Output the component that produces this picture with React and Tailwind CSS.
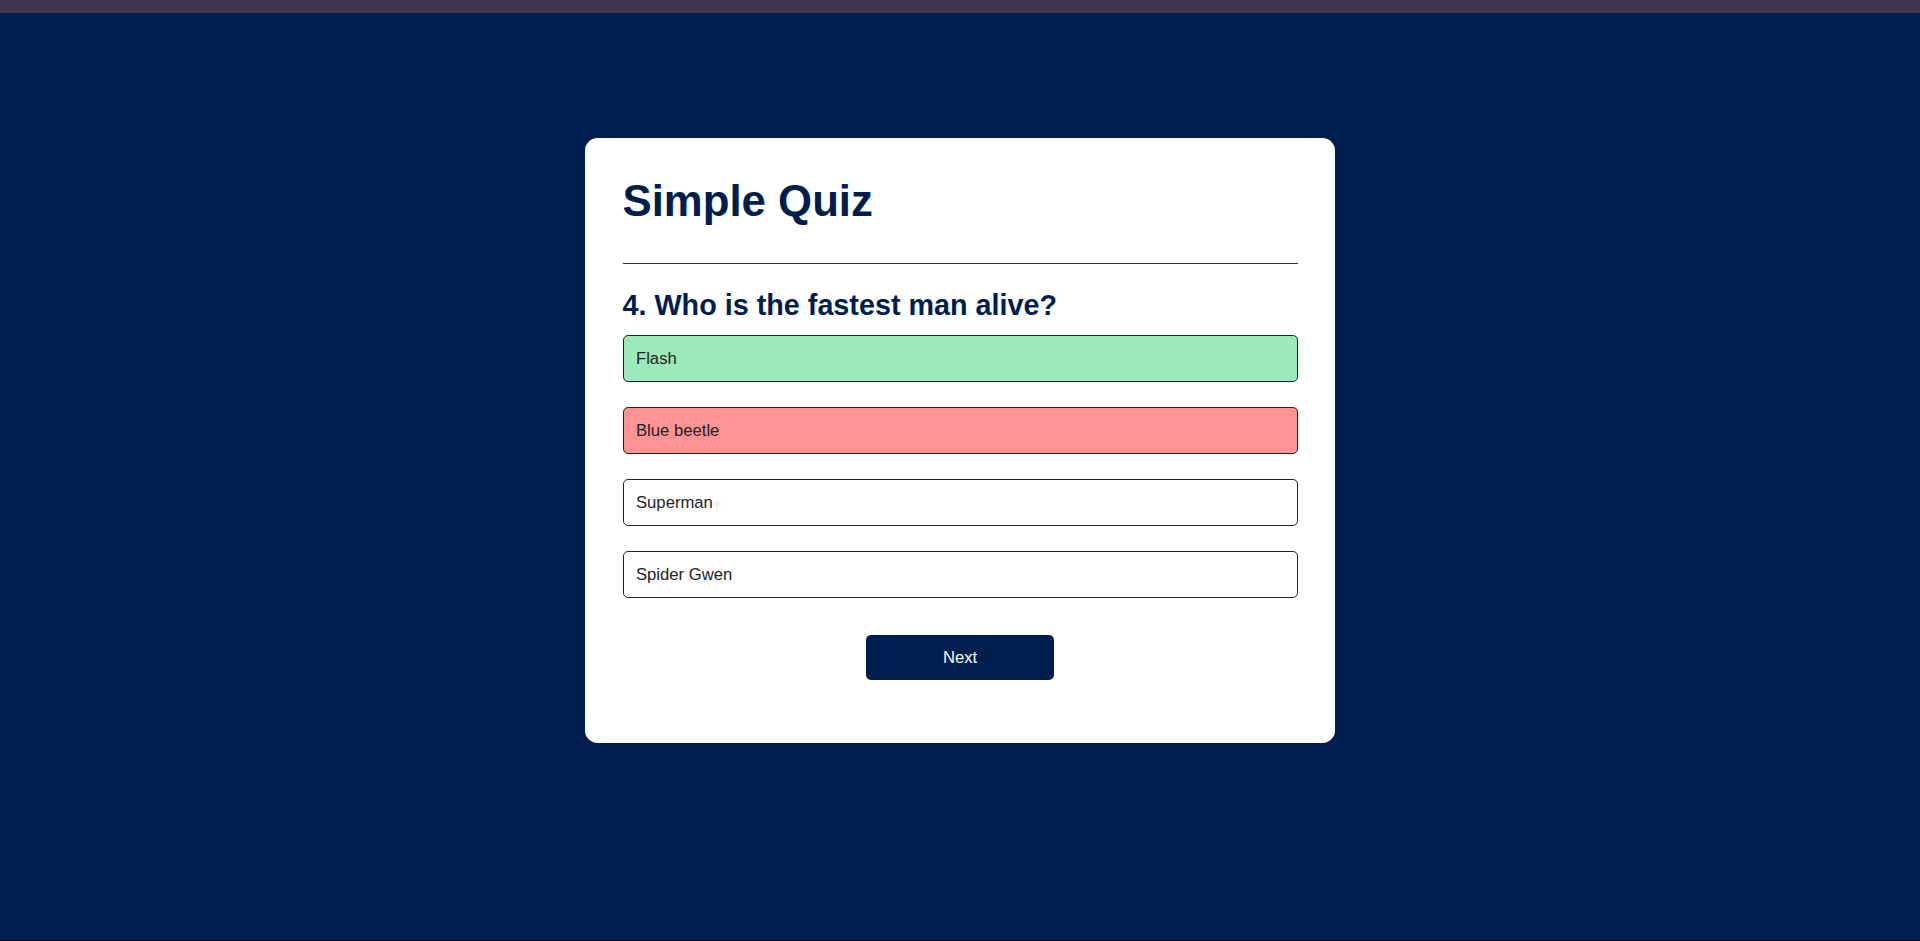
import React, { useState } from "react";

const question = {
  number: 4,
  text: "Who is the fastest man alive?",
  answers: [
    { text: "Flash", correct: true },
    { text: "Blue beetle", correct: false },
    { text: "Superman", correct: false },
    { text: "Spider Gwen", correct: false },
  ],
};

const App = () => {
  const [picked, setPicked] = useState(1);

  const answerClass = (answer, index) => {
    if (picked === null) return "bg-white";
    if (answer.correct) return "bg-[#9aeabc]";
    if (index === picked) return "bg-[#ff9393]";
    return "bg-white";
  };

  return (
    <div className="flex flex-col h-[941px] font-['Liberation_Sans',Arial,sans-serif]">
      <div className="h-[13px] bg-[#3f364d]"></div>
      <div className="flex-1 bg-[#001e4d] pt-[125px]">
        <div className="mx-auto w-[750px] rounded-[12.5px] bg-white p-[37.5px]">
          <h1 className="text-[43.75px] font-bold leading-[50px] text-[#001e4d] pb-[37.5px] border-b border-[#333]">
            Simple Quiz
          </h1>
          <div className="flex flex-col py-[25px]">
            <h2 className="text-[28.75px] font-bold leading-[33px] text-[#001e4d]">
              {question.number}. {question.text}
            </h2>
            <div className="flex flex-col gap-[25px] mt-[12.5px]">
              {question.answers.map((answer, index) => (
                <button
                  key={answer.text}
                  onClick={() => setPicked(index)}
                  className={`flex items-center h-[47px] w-full px-[12.5px] border border-[#222] rounded-[5px] text-left text-[16.67px] text-[#222] font-medium cursor-pointer ${answerClass(
                    answer,
                    index
                  )}`}
                >
                  {answer.text}
                </button>
              ))}
            </div>
            <button className="self-center mt-[37.5px] w-[187.5px] h-[45px] rounded-[5px] bg-[#001e4d] text-white text-[16.67px] font-medium cursor-pointer">
              Next
            </button>
          </div>
        </div>
      </div>
      <div className="h-px bg-black"></div>
    </div>
  );
};

export default App;
